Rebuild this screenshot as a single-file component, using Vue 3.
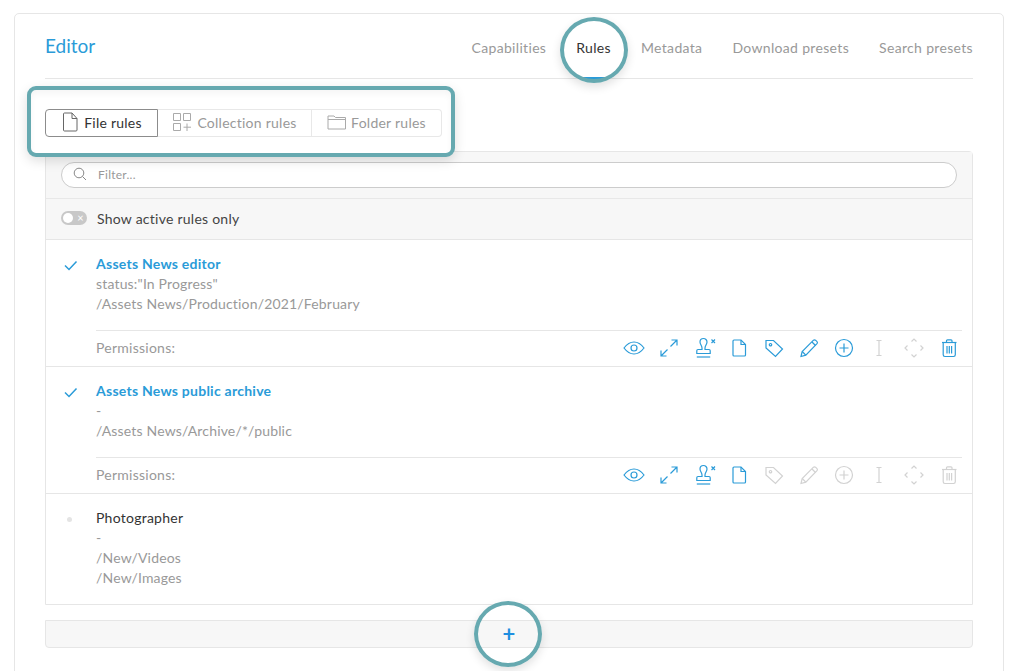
<script setup>
const tabs = ['Capabilities', 'Rules', 'Metadata', 'Download presets', 'Search presets']

const icons = [
  { paths: ['M2 12c3-4 6-6 10-6s7 2 10 6c-3 4-6 6-10 6s-7-2-10-6z', 'M12 9a3 3 0 1 0 0 6a3 3 0 1 0 0-6z'] },
  { paths: ['M13.5 10.5L20 4M14.5 4H20v5.5', 'M10.5 13.5L4 20M4 14.5V20h5.5'] },
  { paths: ['M10 12c0-2.500-2-3.500-2-6a3.500 3.500 0 0 1 7 0c0 2.500-2 3.500-2 6v1.500h4a1.200 1.200 0 0 1 1.200 1.200V17.500H4.800v-2.800a1.200 1.200 0 0 1 1.200-1.200h4z', 'M4.800 21h13.400', 'M19.500 3.500l3.500 3.500M23 3.500L19.500 7'] },
  { paths: ['M7 4h7l4.500 4.500V19a1 1 0 0 1-1 1H7a1 1 0 0 1-1-1V5a1 1 0 0 1 1-1z', 'M14 4v4.500h4.500'] },
  { paths: ['M4 4.500h7.500L20.500 13l-7 7.500L4 12z', 'M8.500 7.500a1.200 1.200 0 1 0 0 2.400a1.200 1.200 0 1 0 0-2.400z'] },
  { paths: ['M4 20.500l1.200-5L16.500 4.200a1.500 1.500 0 0 1 2 0l1.500 1.500a1.500 1.500 0 0 1 0 2L8.800 19.200z', 'M15 6l3.500 3.500', 'M5.200 15.500l3.600 3.700'] },
  { paths: ['M12 3.500a8.500 8.500 0 1 0 0 17a8.500 8.500 0 1 0 0-17z', 'M12 7.500v9M7.500 12h9'] },
  { paths: ['M9.500 4.500h5M9.500 19.500h5M12 4.500v15'] },
  { paths: ['M9.500 5.500L12 3l2.500 2.500', 'M9.500 18.500L12 21l2.500-2.500', 'M5.500 9.500L3 12l2.500 2.500', 'M18.500 9.500L21 12l-2.500 2.500'] },
  { paths: ['M5 6.500h14.500', 'M9.500 6.500V4.800a1 1 0 0 1 1-1h3.500a1 1 0 0 1 1 1v1.700', 'M6.200 6.500v12.300a1.700 1.700 0 0 0 1.700 1.700h8.700a1.700 1.700 0 0 0 1.700-1.700V6.500', 'M10 10v7.500M12.300 10v7.500M14.600 10v7.500'] }
]

const rules = [
  {
    name: 'Assets News editor',
    state: 'on',
    lines: ['status:"In Progress"', '/Assets News/Production/2021/February'],
    enabled: [0, 1, 2, 3, 4, 5, 6, 9]
  },
  {
    name: 'Assets News public archive',
    state: 'on',
    lines: ['-', '/Assets News/Archive/*/public'],
    enabled: [0, 1, 2, 3]
  },
  {
    name: 'Photographer',
    state: 'off',
    lines: ['-', '/New/Videos', '/New/Images'],
    enabled: null
  }
]
</script>

<template>
  <div class="page">
    <section class="card">
      <header class="head">
        <h1>Editor</h1>
        <nav class="tabs">
          <a v-for="tab in tabs" :key="tab" class="tab" :class="{ active: tab === 'Rules' }">
            {{ tab }}
            <span v-if="tab === 'Rules'" class="ring ring-tab"></span>
          </a>
        </nav>
      </header>

      <div class="segments">
        <span class="highlight"></span>
        <button class="seg seg-active">
          <svg width="18" height="20" viewBox="0 0 18 20" class="seg-icon">
            <path d="M3.500 1h7.500l5 5.500V18a1 1 0 0 1-1 1H3.500a1 1 0 0 1-1-1V2a1 1 0 0 1 1-1z" />
            <path d="M11 1v5.500h5" />
          </svg>
          File rules
        </button>
        <button class="seg seg-collection">
          <svg width="20" height="20" viewBox="0 0 20 20" class="seg-icon">
            <path d="M1.500 1.500h7v7h-7zM11.500 1.500h7v7h-7zM1.500 11.500h7v7h-7z" />
            <path d="M15 11.500v7.500M11.500 15.200h7.500" />
          </svg>
          Collection rules
        </button>
        <button class="seg seg-folder">
          <svg width="19" height="15" viewBox="0 0 19 15" class="seg-icon">
            <path d="M1 1h6l1.500 1.500H18.500V14H1zM1 4.500h17.500" />
          </svg>
          Folder rules
        </button>
      </div>

      <div class="list">
        <div class="filter-row">
          <div class="filter">
            <svg width="14" height="14" viewBox="0 0 14 14" class="search">
              <circle cx="6" cy="6" r="4.800" />
              <path d="M9.500 9.500L13 13" />
            </svg>
            <span>Filter...</span>
          </div>
        </div>
        <div class="toggle-row">
          <span class="toggle"><i></i><b>×</b></span>
          Show active rules only
        </div>

        <article v-for="rule in rules" :key="rule.name" class="rule">
          <div class="rule-main">
            <div class="mark">
              <svg v-if="rule.state === 'on'" width="14" height="11" viewBox="0 0 14 11" class="tick">
                <path d="M1 5.500L5 9.500L12.500 1.500" />
              </svg>
              <span v-else class="dot"></span>
            </div>
            <div class="rule-text">
              <h2 :class="{ plain: rule.state === 'off' }">{{ rule.name }}</h2>
              <p v-for="line in rule.lines" :key="line">{{ line }}</p>
            </div>
          </div>
          <div v-if="rule.enabled" class="perms">
            <span>Permissions:</span>
            <div class="perm-icons">
              <svg
                v-for="(icon, i) in icons"
                :key="i"
                width="24"
                height="24"
                viewBox="0 0 24 24"
                class="perm"
                :class="{ on: rule.enabled.includes(i) }"
              >
                <path v-for="d in icon.paths" :key="d" :d="d" />
              </svg>
            </div>
          </div>
        </article>
      </div>

      <div class="add-bar">
        <span class="plus">+</span>
        <span class="ring ring-add"></span>
      </div>
    </section>
  </div>
</template>

<style scoped>
.page {
  padding: 13px 13px 0 14px;
  font-family: Lato, "Open Sans", sans-serif;
  font-size: 14px;
  letter-spacing: 0.25px;
  color: #999;
}
.card {
  border: 1px solid #e6e6e6;
  border-radius: 5px;
  padding: 0 30px 40px;
}
.head {
  height: 64px;
  border-bottom: 1px solid #e6e6e6;
  display: flex;
  justify-content: space-between;
}
h1 {
  margin: 20px 0 0;
  font-size: 19px;
  line-height: 24px;
  font-weight: 400;
  letter-spacing: 0;
  color: #2a9bd8;
}
.tabs {
  display: flex;
  gap: 30px;
  letter-spacing: 0.33px;
}
.tab {
  position: relative;
  height: 64px;
  padding-top: 24px;
  box-sizing: border-box;
  line-height: 20px;
  font-size: 14px;
  color: #999;
}
.tab.active {
  color: #333;
}
.tab.active::after {
  content: "";
  position: absolute;
  left: 50%;
  width: 22px;
  margin-left: -11px;
  bottom: -1px;
  height: 2px;
  background: #2a9bd8;
}
.ring {
  position: absolute;
  border: 4px solid #66a9b0;
  border-radius: 50%;
  box-sizing: border-box;
  box-shadow: 0 4px 10px rgba(0, 0, 0, 0.12);
  z-index: 3;
}
.ring-tab {
  left: 50%;
  margin-left: -34px;
  top: 3px;
  width: 68px;
  height: 66px;
}
.ring-add {
  left: 428px;
  top: -20px;
  width: 68px;
  height: 66px;
}
.segments {
  position: relative;
  display: flex;
  width: 397px;
  height: 28px;
  margin-top: 30px;
}
.highlight {
  position: absolute;
  left: -18px;
  top: -23px;
  width: 428px;
  height: 71px;
  box-sizing: border-box;
  border: 4px solid #66a9b0;
  border-radius: 9px;
  background: #fff;
  box-shadow: 0 4px 12px rgba(0, 0, 0, 0.13), inset 0 4px 6px rgba(0, 0, 0, 0.04);
}
.seg {
  position: relative;
  display: flex;
  align-items: center;
  justify-content: center;
  gap: 5px;
  height: 28px;
  padding: 0 0 2px;
  border: 1px solid #e8e8e8;
  border-left: 0;
  background: #fff;
  font: inherit;
  letter-spacing: inherit;
  color: #999;
}
.seg-active {
  width: 113px;
  gap: 5px;
  border: 1px solid #8c8c8c;
  border-radius: 4px 0 0 4px;
  color: #333;
}
.seg-collection {
  width: 154px;
}
.seg-folder {
  width: 130px;
  border-radius: 0 4px 4px 0;
}
.seg-icon {
  fill: none;
  stroke: #aaa;
  stroke-width: 1;
}
.seg-active .seg-icon {
  stroke: #666;
}
.list {
  margin-top: 14px;
  border: 1px solid #e6e6e6;
  border-radius: 4px 4px 0 0;
}
.filter-row {
  height: 47px;
  padding: 10px 15px 0;
  box-sizing: border-box;
  background: #f7f7f7;
  border-bottom: 1px solid #e8e8e8;
}
.filter {
  display: flex;
  align-items: center;
  gap: 11px;
  height: 26px;
  padding: 0 0 2px 11px;
  box-sizing: border-box;
  background: #fff;
  border: 1px solid #ccc;
  border-radius: 13px;
  font-size: 12px;
  color: #999;
}
.search {
  fill: none;
  stroke: #888;
  stroke-width: 1;
}
.toggle-row {
  display: flex;
  align-items: center;
  gap: 10px;
  height: 41px;
  padding: 0 0 2px 15px;
  box-sizing: border-box;
  background: #f7f7f7;
  border-bottom: 1px solid #e6e6e6;
  color: #444;
}
.toggle {
  position: relative;
  display: block;
  width: 26px;
  height: 14px;
  border-radius: 7px;
  background: #c8c8c8;
}
.toggle i {
  position: absolute;
  left: 2px;
  top: 2px;
  width: 10px;
  height: 10px;
  border-radius: 50%;
  background: #fff;
}
.toggle b {
  position: absolute;
  right: 3px;
  top: -1px;
  line-height: 15px;
  font-size: 11px;
  font-weight: 400;
  color: #fff;
}
.rule {
  border-bottom: 1px solid #e6e6e6;
}
.rule:last-child {
  border-bottom: 0;
}
.rule-main {
  display: flex;
  padding: 14px 0 16px;
}
.mark {
  width: 50px;
  padding: 6px 0 0 18px;
  box-sizing: border-box;
  flex: none;
}
.tick {
  display: block;
  fill: none;
  stroke: #2a9bd8;
  stroke-width: 1.500;
}
.dot {
  display: block;
  width: 5px;
  height: 5px;
  margin: 3px 0 0 3px;
  border-radius: 50%;
  background: #e4e4e4;
}
h2 {
  margin: 0;
  font-size: 14px;
  line-height: 20px;
  font-weight: 700;
  color: #2a9bd8;
}
h2.plain {
  font-weight: 400;
  color: #333;
}
.rule-text p {
  margin: 0;
  line-height: 20px;
  letter-spacing: 0.17px;
  color: #999;
}
.perms {
  display: flex;
  align-items: center;
  justify-content: space-between;
  height: 36px;
  padding-bottom: 2px;
  box-sizing: border-box;
  margin: 0 10px 0 50px;
  border-top: 1px solid #e6e6e6;
  color: #999;
}
.perm-icons {
  display: flex;
  gap: 11px;
  padding-right: 1px;
}
.perm {
  fill: none;
  stroke: #d2d2d2;
  stroke-width: 1.200;
}
.perm.on {
  stroke: #2a9bd8;
}
.add-bar {
  position: relative;
  display: flex;
  align-items: center;
  justify-content: center;
  height: 28px;
  margin-top: 15px;
  box-sizing: border-box;
  background: #f7f7f7;
  border: 1px solid #e6e6e6;
  border-radius: 0 0 4px 4px;
}
.plus {
  font-size: 22px;
  line-height: 28px;
  font-weight: 700;
  color: #1f8fe0;
}
</style>

<style>
html,
body {
  margin: 0;
  height: 671px;
  overflow: hidden;
  background: #fff;
}
</style>
